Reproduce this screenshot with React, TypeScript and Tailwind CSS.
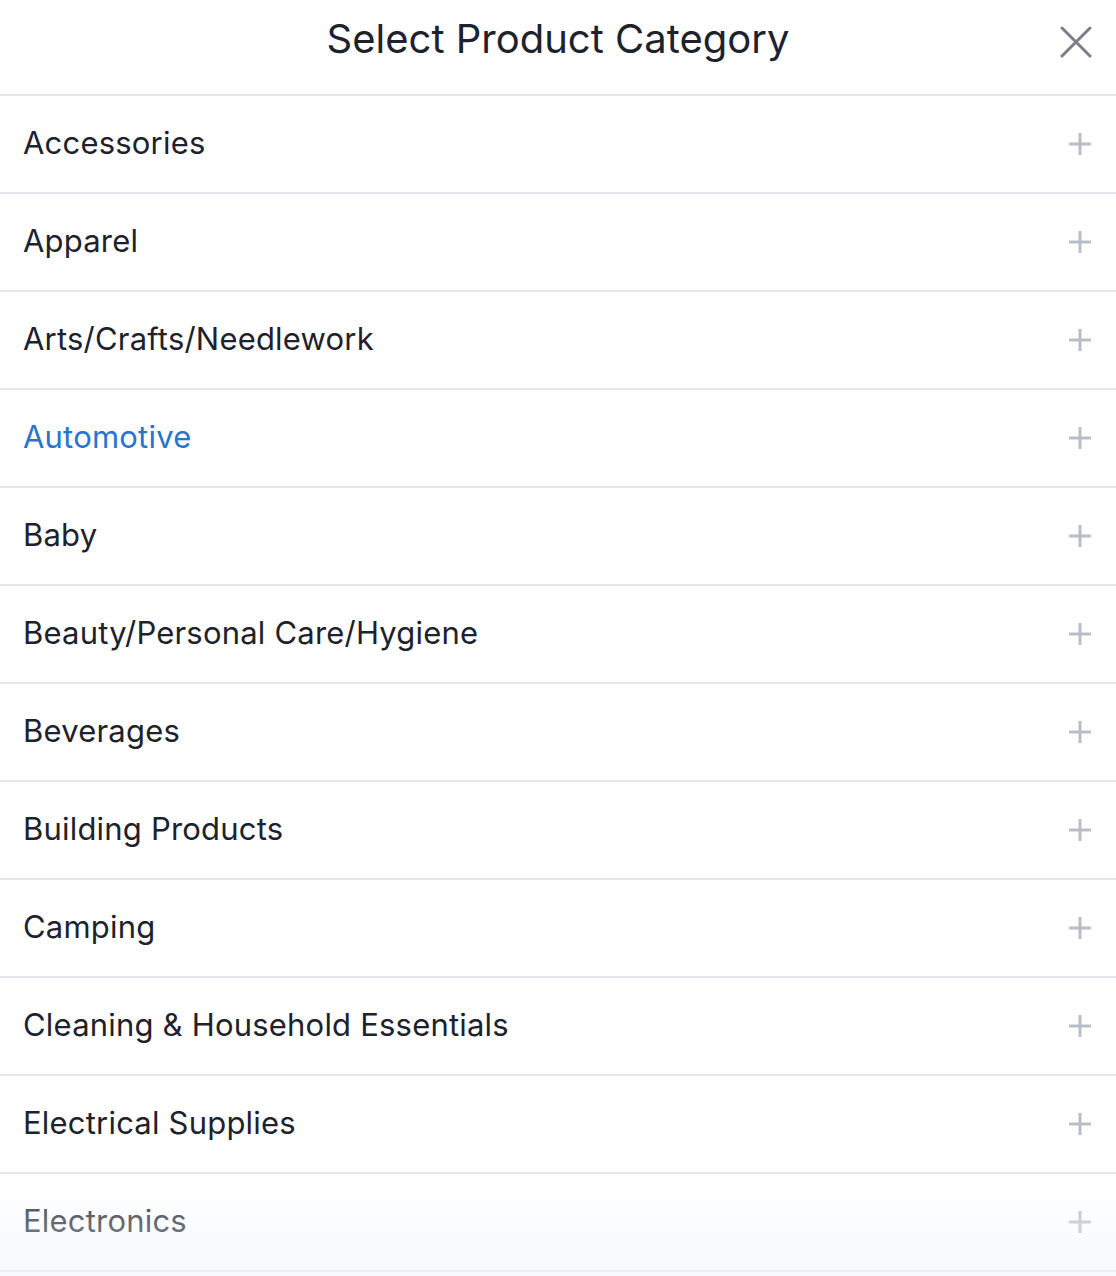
import { useState } from 'react';

const categories = [
  'Accessories',
  'Apparel',
  'Arts/Crafts/Needlework',
  'Automotive',
  'Baby',
  'Beauty/Personal Care/Hygiene',
  'Beverages',
  'Building Products',
  'Camping',
  'Cleaning & Household Essentials',
  'Electrical Supplies',
  'Electronics',
];

function PlusIcon() {
  return (
    <svg width="24" height="24" viewBox="0 0 24 24" className="text-[#b9bdc8]">
      <path d="M12 1v22M1 12h22" stroke="currentColor" strokeWidth="3" />
    </svg>
  );
}

function CloseIcon() {
  return (
    <svg width="32" height="32" viewBox="0 0 32 32" className="text-[#7b7f8c]">
      <path d="M2 2l28 28M30 2L2 30" stroke="currentColor" strokeWidth="3" strokeLinecap="round" />
    </svg>
  );
}

export default function App() {
  const [active] = useState('Automotive');

  return (
    <div className="relative w-[1116px] h-[1276px] overflow-hidden bg-white font-['Inter',sans-serif] text-[#1d222c]">
      <div className="relative flex items-center justify-center h-[96px] border-b-2 border-[#e3e6ea]">
        <h1 className="text-[40px] pb-[16px]">Select Product Category</h1>
        <button type="button" className="absolute right-[24px] top-[26px]">
          <CloseIcon />
        </button>
      </div>
      <ul>
        {categories.map((name) => (
          <li
            key={name}
            className="flex items-center justify-between h-[98px] border-b-2 border-[#e3e6ea] pl-[23px] pr-[24px]">
            <span
              className={`text-[31px] tracking-[0.2px] pb-[2px] ${name === active ? 'text-[#2a74cb]' : ''}`}>
              {name}
            </span>
            <PlusIcon />
          </li>
        ))}
      </ul>
      <div className="pointer-events-none absolute left-0 right-0 top-[1176px] h-[100px] bg-gradient-to-b from-[rgba(255,255,255,0.1)] to-[rgba(240,245,252,0.6)]" />
    </div>
  );
}
